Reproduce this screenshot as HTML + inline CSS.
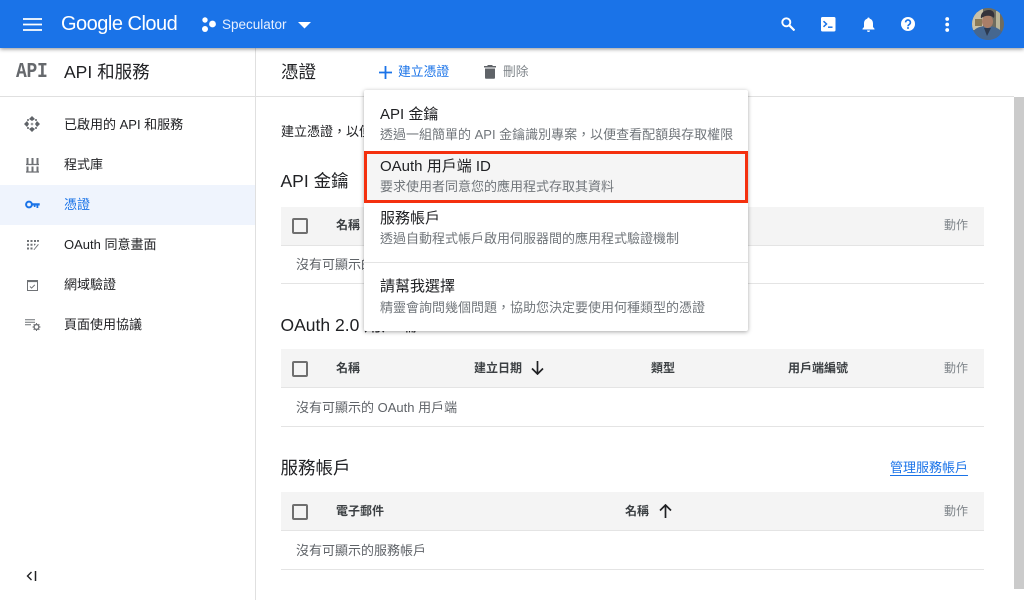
<!DOCTYPE html>
<html lang="zh-Hant"><head><meta charset="utf-8"><title>憑證</title>
<style>
*{box-sizing:border-box}
html,body{margin:0;padding:0;width:1024px;height:600px;overflow:hidden;background:#fff}
body{position:relative;font-family:"Liberation Sans","Noto Sans CJK TC",sans-serif;color:#202124}
.t{position:absolute;white-space:nowrap;line-height:20px}
.b{position:absolute}
svg{position:absolute;display:block}
.nav{font-size:13px;left:64px;color:#202124}
.th{font-size:12px;font-weight:700;color:#3c4043}
.act{font-size:12px;color:#80868b;left:944px}
.h2{font-size:17.500px;left:280.500px;color:#202124;line-height:24px}
.empty{font-size:13px;left:296px;color:#5f6368}
.head{position:absolute;left:281px;width:703px;height:39px;background:#f4f4f4;border-bottom:1px solid #e4e4e4}
.line{position:absolute;left:281px;width:703px;height:1px;background:#e4e4e4}
.cb{position:absolute;left:292px;width:16px;height:16px;border:2px solid #6f6f6f;border-radius:2px}
.mt{font-size:15px;left:380px;color:#202124}
.ms{font-size:13px;left:380px;color:#70757a}
</style></head>
<body>
<div class="b" style="left:0;top:0;width:1024px;height:48px;background:#1a73e8;box-shadow:0 1px 4px rgba(0,0,0,.45);z-index:3"></div>
<div style="position:absolute;z-index:4;left:0;top:0;width:1024px;height:48px">
<svg style="left:23px;top:18px" width="19" height="13"><path d="M0 1h19M0 6.500h19M0 12h19" stroke="#fff" stroke-width="1.700"/></svg>
<div class="t" style="left:61px;top:12px;font-size:20px;line-height:24px;color:#fff;letter-spacing:-.5px">Google Cloud</div>
<svg style="left:201px;top:16px" width="16" height="17" fill="#fff"><circle cx="4" cy="4" r="2.700"/><circle cx="11.500" cy="8" r="3.400"/><circle cx="4" cy="13" r="3"/></svg>
<div class="t" style="left:222px;top:15px;font-size:13.500px;color:#e8f0fe">Speculator</div>
<svg style="left:298px;top:22px" width="13" height="7"><path d="M0 0h13L6.500 6.500z" fill="#fff"/></svg>
<svg style="left:781px;top:17px" width="14" height="14" fill="none" stroke="#fff" stroke-width="1.900"><circle cx="5.300" cy="5.300" r="4"/><path d="M8.300 8.300L13.500 13.500" stroke-width="2.200"/></svg>
<svg style="left:821px;top:17px" width="15" height="15"><rect width="14.500" height="14.500" rx="1.500" fill="#fff"/><path d="M2.500 4.200L5.500 7L2.500 9.800" stroke="#1a73e8" stroke-width="1.500" fill="none"/><path d="M7 10.200h4.500" stroke="#1a73e8" stroke-width="1.500"/></svg>
<svg style="left:862px;top:17px" width="13" height="16" fill="#fff"><path d="M6.500 0.500c.8 0 1.200.5 1.200 1.200C10 2.300 11 4.200 11 6.500V10l1.500 1.800v.7H.5v-.7L2 10V6.500C2 4.200 3 2.300 5.300 1.700 5.300 1 5.700.5 6.500.5z"/><path d="M5 13.500h3a1.500 1.500 0 0 1-3 0z"/></svg>
<svg style="left:901px;top:17px" width="14" height="14"><circle cx="7" cy="7" r="7" fill="#fff"/><path d="M4.600 5.400a2.400 2.400 0 1 1 3.700 2C7.400 8 7 8.400 7 9.200" stroke="#1a73e8" stroke-width="1.600" fill="none"/><circle cx="7" cy="11" r="1" fill="#1a73e8"/></svg>
<svg style="left:945px;top:17px" width="5" height="15" fill="#fff"><circle cx="2.200" cy="2" r="1.900"/><circle cx="2.200" cy="7.500" r="1.900"/><circle cx="2.200" cy="13" r="1.900"/></svg>
<svg style="left:972px;top:8px" width="32" height="32"><defs><clipPath id="av"><circle cx="16" cy="16" r="16"/></clipPath></defs><g clip-path="url(#av)"><rect width="32" height="32" fill="#6e6c5f"/><rect width="11" height="22" fill="#c9c1a8"/><rect x="3" y="11" width="7" height="7" fill="#8a7a58"/><rect x="24" y="3" width="4" height="22" fill="#b9b59a"/><path d="M1 32V24c2-4 7-6 14-6s12 2 16 7v7z" fill="#46678f"/><path d="M12 20l3 8 4-8z" fill="#2c3a50"/><ellipse cx="15.500" cy="13.500" rx="5.500" ry="6.500" fill="#a97e68"/><path d="M9 10.500c-1-6 4-8.500 8-8.500 5 0 6 4 5 8-3-3-9-3-13 .5z" fill="#34323a"/></g></svg>
</div>

<div class="b" style="left:255px;top:48px;width:1px;height:552px;background:#e0e0e0"></div>
<div class="b" style="left:0;top:96px;width:1014px;height:1px;background:#e0e0e0"></div>
<div class="b" style="left:1014px;top:97px;width:10px;height:492px;background:#cbcbcb"></div>

<div class="t" style="left:16px;top:61px;font:700 18px/22px 'Liberation Mono',monospace;color:#66696d;letter-spacing:-.3px;transform:scaleY(1.200);transform-origin:0 50%">API</div>
<div class="t" style="left:64px;top:60px;font-size:17.500px;line-height:24px">API 和服務</div>
<div class="t" style="left:281px;top:60px;font-size:17.500px;line-height:24px">憑證</div>

<svg style="left:379px;top:66px" width="13" height="13"><path d="M6.500 0v13M0 6.500h13" stroke="#1a73e8" stroke-width="1.800"/></svg>
<div class="t" style="left:398px;top:62px;font-size:12.800px;color:#1a73e8">建立憑證</div>
<svg style="left:484px;top:65px" width="12" height="14" fill="#5f6368"><path d="M4 0h4l1 1h3v1.500H0V1h3z"/><path d="M1 3.500h10V12.500a1.300 1.300 0 0 1-1.300 1.300H2.300A1.300 1.300 0 0 1 1 12.500z"/></svg>
<div class="t" style="left:503px;top:62px;font-size:12.800px;color:#80868b">刪除</div>

<!-- sidebar -->
<div class="b" style="left:0;top:185px;width:255px;height:40px;background:#eff4fd"></div>
<svg style="left:24px;top:116px" width="16" height="16" fill="#5f6368"><path d="M8 0l3 3-3 2-3-2z M8 16l-3-3 3-2 3 2z M0 8l3-3 2 3-2 3z M16 8l-3 3-2-3 2-3z"/><circle cx="8" cy="8" r="1.300" fill="#9a9c9f"/><circle cx="4" cy="4" r="1"/><circle cx="12" cy="4" r="1"/><circle cx="4" cy="12" r="1"/><circle cx="12" cy="12" r="1"/></svg>
<svg style="left:26px;top:158px" width="13" height="15" stroke="#6f7276" fill="none"><path d="M1.500 0v6M6.500 0v6M11.500 0v6M1.500 8.500v5M6.500 8.500v5M11.500 8.500v5" stroke-width="2"/><path d="M0 6.500h13M0 14h13" stroke-width="1.300"/></svg>
<svg style="left:25px;top:200px" width="15" height="9"><circle cx="4" cy="4.500" r="2.900" fill="none" stroke="#1a73e8" stroke-width="2"/><path d="M6.500 3.300h8.200v2.200h-1.400V8h-1.800V5.500h-1V7H8.800V5.500H6.500z" fill="#1a73e8"/></svg>
<svg style="left:27px;top:240px" width="12" height="10" fill="#6f7276"><path d="M0 0h2v2H0zM3.500 0h2v2h-2zM7 0h2v2H7zM0 3.800h2v2H0zM3.500 3.800h2v2h-2zM7 3.800h1.500v1L7 5.800zM0 7.500h2v2H0zM3.500 7.500h2v2h-2z"/><path d="M6.500 9.800L11 4l.8.600-4.500 5.400z"/><path d="M10 0h2v1.800h-2z"/></svg>
<svg style="left:27px;top:280px" width="11" height="11" fill="none" stroke="#6f7276"><rect x=".5" y=".5" width="10" height="10" stroke-width="1"/><path d="M.5 1.300h10" stroke-width="1.600"/><path d="M3 6.500l1.600 1.600 3.200-3.200" stroke-width="1"/></svg>
<svg style="left:25px;top:319px" width="16" height="12"><path d="M0 .7h10M0 3.200h10M0 5.700h6" stroke="#6f7276" stroke-width="1"/><circle cx="11.500" cy="8" r="2.400" fill="none" stroke="#6f7276" stroke-width="1.400"/><path d="M11.500 4v1.500M11.500 10.500V12M7.500 8H9M14 8h1.500M8.700 5.200l1 1M13.300 9.800l1 1M14.300 5.200l-1 1M9.700 9.800l-1 1" stroke="#6f7276" stroke-width="1.100"/></svg>

<div class="t nav" style="top:115px">已啟用的 API 和服務</div>
<div class="t nav" style="top:155px">程式庫</div>
<div class="t nav" style="top:195px;color:#1a73e8">憑證</div>
<div class="t nav" style="top:235px">OAuth 同意畫面</div>
<div class="t nav" style="top:275px">網域驗證</div>
<div class="t nav" style="top:315px">頁面使用協議</div>
<svg style="left:26px;top:571px" width="11" height="10"><path d="M5.500 1L1.500 5l4 4" stroke="#202124" stroke-width="1.400" fill="none"/><path d="M9.500 0v10" stroke="#202124" stroke-width="1.500"/></svg>

<!-- main -->
<div class="t" style="left:281px;top:122px;font-size:13px">建立憑證，以便存取您已啟用的 API</div>

<div class="t h2" style="top:169px">API 金鑰</div>
<div class="head" style="top:207px"></div>
<div class="cb" style="top:218px"></div>
<div class="t th" style="left:336px;top:215px">名稱</div>
<div class="t act" style="top:215px">動作</div>
<div class="t empty" style="top:255px">沒有可顯示的 API 金鑰</div>
<div class="line" style="top:283px"></div>

<div class="t h2" style="top:313px">OAuth 2.0 用戶端 ID</div>
<div class="head" style="top:349px"></div>
<div class="cb" style="top:361px"></div>
<div class="t th" style="left:336px;top:358px">名稱</div>
<div class="t th" style="left:474px;top:358px">建立日期</div>
<svg style="left:531px;top:361px" width="13" height="14"><path d="M6.500 0v13M1 7.500l5.500 5.500L12 7.500" stroke="#202124" stroke-width="1.700" fill="none"/></svg>
<div class="t th" style="left:651px;top:358px">類型</div>
<div class="t th" style="left:788px;top:358px">用戶端編號</div>
<div class="t act" style="top:358px">動作</div>
<div class="t empty" style="top:398px">沒有可顯示的 OAuth 用戶端</div>
<div class="line" style="top:426px"></div>

<div class="t h2" style="top:456px">服務帳戶</div>
<div class="t" style="left:890px;top:458px;font-size:13px;color:#1a73e8;text-decoration:underline;text-underline-offset:3px">管理服務帳戶</div>
<div class="head" style="top:492px"></div>
<div class="cb" style="top:504px"></div>
<div class="t th" style="left:336px;top:501px">電子郵件</div>
<div class="t th" style="left:625px;top:501px">名稱</div>
<svg style="left:659px;top:504px" width="13" height="14"><path d="M6.500 14V1M1 6.500L6.500 1 12 6.500" stroke="#202124" stroke-width="1.700" fill="none"/></svg>
<div class="t act" style="top:501px">動作</div>
<div class="t empty" style="top:541px">沒有可顯示的服務帳戶</div>
<div class="line" style="top:569px"></div>

<!-- menu -->
<div class="b" style="left:364px;top:90px;width:384px;height:241px;background:#fff;border-radius:2px;box-shadow:0 1px 4px rgba(0,0,0,.35);z-index:5">
<div class="b" style="left:0;top:61px;width:384px;height:52px;background:#f5f5f5;border:3px solid #f4300e"></div>
<div class="b" style="left:0;top:172px;width:384px;height:1px;background:#e4e4e4"></div>
</div>
<div style="position:absolute;z-index:6;left:0;top:0">
<div class="t mt" style="top:105px">API 金鑰</div>
<div class="t ms" style="top:125px">透過一組簡單的 API 金鑰識別專案，以便查看配額與存取權限</div>
<div class="t mt" style="top:157px">OAuth 用戶端 ID</div>
<div class="t ms" style="top:177px">要求使用者同意您的應用程式存取其資料</div>
<div class="t mt" style="top:209px">服務帳戶</div>
<div class="t ms" style="top:229px">透過自動程式帳戶啟用伺服器間的應用程式驗證機制</div>
<div class="t mt" style="top:277px">請幫我選擇</div>
<div class="t ms" style="top:298px">精靈會詢問幾個問題，協助您決定要使用何種類型的憑證</div>
</div>
</body></html>
